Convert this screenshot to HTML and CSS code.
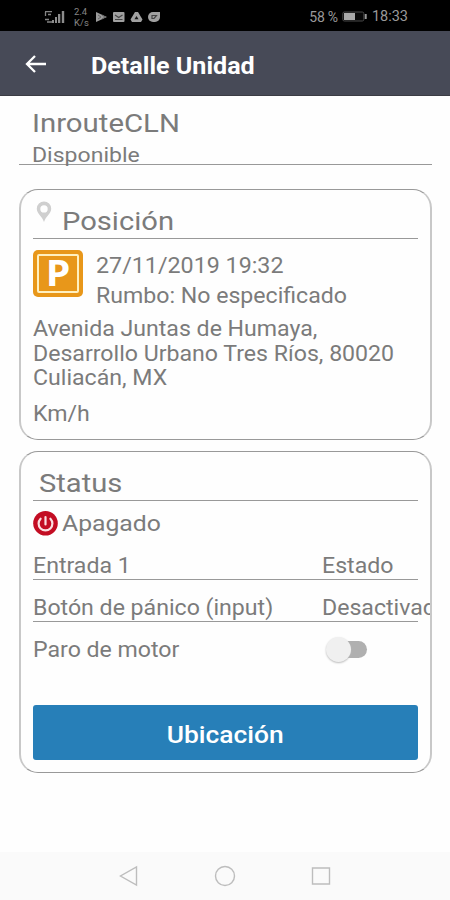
FILE: index.html
```html
<!DOCTYPE html>
<html lang="es">
<head>
<meta charset="utf-8">
<title>Detalle Unidad</title>
<link rel="stylesheet" href="styles.css">
</head>
<body>
<div class="statusbar">
  <svg class="signal" width="22" height="16" viewBox="0 0 22 16"><g fill="none" stroke="#858585" stroke-width="1.3"><path d="M1 2.700h7M1.500 3v4M4 5.500h3M1 10.500h4M3 13h5"/></g><g fill="#8c8c8c"><path d="M8 11h2v3H8zM11 8h2v6h-2zM14 5h2.300v9H14zM17.800 2h2.400v12h-2.400z"/></g></svg>
  <div class="rate"><span>2.4</span><span>K/s</span></div>
  <svg class="notifs" width="66" height="14" viewBox="0 0 66 14"><path d="M1 2l11 5-11 5z" fill="#9a9a9a"/><path d="M3 5l3 2-3 2M7 5l3 2-3 2" stroke="#666" fill="none"/><rect x="18" y="2" width="11.500" height="10" rx="1" fill="#a0a0a0"/><path d="M20 5l3.700 2.500L27.500 5M20 9.500h7.500" stroke="#444" fill="none" stroke-width="1.200"/><path d="M40 2h3l4.500 7.500-1.500 2.500h-9L35.500 9.500z" fill="#a0a0a0"/><path d="M41.500 6l2 3.200h-4z" fill="#151515"/><path d="M58 2h7v5a5 5 0 0 1-5 5h-2a5 5 0 0 1 0-10z" fill="#a0a0a0"/><path d="M57 5.500h4.500L59 8.500h-2z" fill="none" stroke="#444" stroke-width="1.200"/></svg>
  <span class="battery-text">58 %</span>
  <svg class="battery" width="26" height="11" viewBox="0 0 26 11"><rect x=".8" y="1" width="21" height="9" rx="1.500" fill="#080808" stroke="#494949"/><rect x="2" y="2" width="11" height="7" fill="#a8a8a8"/><path d="M23.700 3v5" stroke="#999" stroke-width="2"/></svg>
  <span class="clock">18:33</span>
</div>
<header class="appbar">
  <svg class="back" width="22" height="20" viewBox="0 0 22 20"><path d="M10 2L2 10l8 8M2.500 10H21" fill="none" stroke="#fff" stroke-width="2.300"/></svg>
  <h1 class="appbar-title">Detalle Unidad</h1>
</header>
<main class="content">
  <section class="unit">
    <h2 class="unit-name">InrouteCLN</h2>
    <p class="unit-state">Disponible</p>
  </section>
  <section class="card position">
    <div class="card-title">
      <svg class="pin" width="16" height="22" viewBox="0 0 16 22"><path fill-rule="evenodd" d="M8 .5a7.200 7.200 0 0 0-7.200 7.200C.8 12.500 6 15 8 21c2-6 7.200-8.500 7.200-13.300A7.200 7.200 0 0 0 8 .5zm0 3.700a3.700 3.700 0 1 1 0 7.400 3.700 3.700 0 0 1 0-7.400z" fill="#cfcfcf"/></svg>
      <h3 class="heading position-heading">Posición</h3>
    </div>
    <div class="fix">
      <div class="parking"><div class="parking-frame"><span class="parking-letter">P</span></div></div>
      <div class="fix-text">
        <p class="date">27/11/2019 19:32</p>
        <p class="course">Rumbo: No especificado</p>
      </div>
    </div>
    <p class="address">Avenida Juntas de Humaya,<br>Desarrollo Urbano Tres Ríos, 80020<br>Culiacán, MX</p>
    <p class="speed">Km/h</p>
  </section>
  <section class="card status">
    <div class="card-title"><h3 class="heading status-heading">Status</h3></div>
    <div class="engine">
      <svg width="26" height="26" viewBox="0 0 26 26"><circle cx="12.500" cy="12.300" r="12.300" fill="#c30d23"/><path d="M7.600 7.700a6.900 6.900 0 1 0 9.800 0M12.500 6v7.500" fill="none" stroke="#fbdfe1" stroke-width="2.200" stroke-linecap="round"/></svg>
      <span class="off">Apagado</span>
    </div>
    <div class="row first"><span class="label">Entrada 1</span><span class="value">Estado</span></div>
    <div class="row second"><span class="label">Botón de pánico (input)</span><span class="value">Desactivado</span></div>
    <div class="row motor"><span class="label">Paro de motor</span><span class="switch"><span class="thumb"></span></span></div>
    <button class="locate" type="button"><span class="locate-label">Ubicación</span></button>
  </section>
</main>
<nav class="navbar">
  <svg width="20" height="22" viewBox="0 0 20 22"><path d="M17.500 2v18L1.500 11z"/></svg>
  <svg width="22" height="22" viewBox="0 0 22 22"><circle cx="11" cy="11" r="9.500"/></svg>
  <svg width="20" height="20" viewBox="0 0 20 20"><path d="M1.500 2h17v16h-17z"/></svg>
</nav>
</body>
</html>
```
FILE: styles.css
```css
* { box-sizing: border-box; }
body {
  margin: 0;
  width: 450px;
  height: 900px;
  overflow: hidden;
  display: flex;
  flex-direction: column;
  background: #fefefe;
  color: #7b7b7b;
  font-family: Roboto, "Liberation Sans", sans-serif;
  font-size: 21.5px;
  white-space: nowrap;
}
h1, h2, h3, p { margin: 0; font-weight: 400; }
svg { display: block; flex: none; }

/* Slightly extended letterforms */
.appbar-title, .unit-name, .unit-state, .heading, .date, .course,
.address, .speed, .off, .label, .value {
  width: fit-content;
  transform: scaleX(1.075);
  transform-origin: left center;
}

.statusbar {
  height: 31px;
  flex: none;
  display: flex;
  align-items: center;
  padding: 2px 42px 0 44px;
  background: #000;
  color: #9a9a9a;
}
.rate {
  width: 15px;
  margin-left: 8px;
  display: flex;
  flex-direction: column;
  font-size: 9.5px;
  line-height: 11px;
  color: #858585;
}
.notifs { margin-left: 6px; }
.battery-text { margin-left: auto; font-size: 14px; letter-spacing: -.2px; }
.battery { margin-left: 4px; }
.clock { margin-left: 4px; font-size: 14.5px; }

.appbar {
  height: 65px;
  flex: none;
  display: flex;
  align-items: center;
  padding: 2px 0 0 25px;
  background: #474a57;
  border-bottom: 1px solid #3b3c44;
  color: #fff;
}
.appbar .appbar-title {
  margin: 3px 0 0 43.5px;
  font-size: 24px;
  font-weight: 700;
  transform: scaleX(1.045);
}

.content { flex: 1; padding: 0 18px 0 19px; }
.unit {
  padding: 13px 0 0 13px;
  height: 69px;
  border-bottom: 1px solid #999;
}
.unit-name { font-size: 26.5px; line-height: 28px; }
.unit-state { margin-top: 9px; font-size: 21px; line-height: 18px; }
.unit .unit-name { transform: scaleX(1.108); }
.unit .unit-state { transform: scaleX(1.097); }

.card {
  border: 1px solid #999;
  border-right: 2px solid #c8c8c8;
  border-left: 2px solid #c8c8c8;
  border-radius: 19px;
  padding: 0 12px;
  overflow: hidden;
}
.position { margin-top: 24px; height: 251px; }
.status { margin-top: 11px; height: 322px; }
.card-title {
  height: 49px;
  padding-top: 14px;
  display: flex;
  align-items: center;
  border-bottom: 1px solid #999;
}
.card .heading { font-size: 26.5px; line-height: 34px; transform: scaleX(1.1); }
.pin { align-self: flex-start; margin: -3px 0 0 3px; }
.position-heading { margin-left: 10px; }
.status-heading { margin-left: 6px; }

.fix { display: flex; margin-top: 12px; height: 60px; }
.parking {
  width: 50px;
  height: 47px;
  margin-top: -1px;
  padding: 4px;
  border-radius: 5px;
  background: #e8971a;
}
.parking-frame {
  height: 39px;
  display: flex;
  align-items: center;
  justify-content: center;
  border: 2px solid #fff0bf;
  border-radius: 2px;
  color: #fff;
  font: 700 35px/35px "Open Sans", sans-serif;
}
.parking-letter { transform: translateY(-1px) scaleX(1.12); }
.fix-text { margin-left: 12.5px; line-height: 30px; }
.fix-text .date { transform: scaleX(1.082); }
.address { margin-top: 6px; line-height: 24.7px; }
.speed { margin-top: 10px; line-height: 26px; }

.engine { height: 45px; display: flex; align-items: center; }
.engine .off { margin-left: 3px; transform: scaleX(1.15); }
.row {
  display: grid;
  grid-template-columns: 289px 1fr;
  align-items: center;
  border-bottom: 1px solid #999;
}
.first { height: 34px; padding-top: 6px; }
.second { height: 42px; padding-top: 14px; }
.motor { height: 55px; border: 0; }
.switch {
  display: block;
  width: 36px;
  height: 17px;
  margin-left: 9px;
  border-radius: 9px;
  background: #b0b0b0;
}
.thumb {
  display: block;
  width: 25px;
  height: 25px;
  border-radius: 50%;
  background: #f0f0f0;
  box-shadow: 0 1px 2px #bbb;
  transform: translate(-5px, -4px);
}
.locate {
  display: block;
  width: 100%;
  height: 55px;
  margin-top: 28px;
  padding: 4px 0 0;
  border: 0;
  border-radius: 3px;
  background: #277fb8;
  color: #fff;
  font: 500 24px Roboto, sans-serif;
}
.locate-label { display: inline-block; transform: scaleX(1.1); }

.navbar {
  height: 48px;
  flex: none;
  display: flex;
  align-items: center;
  gap: 75px;
  padding-left: 119px;
  background: #fafafa;
}
.navbar path, .navbar circle { fill: none; stroke: #bdbdbd; stroke-width: 1.4; }
```
